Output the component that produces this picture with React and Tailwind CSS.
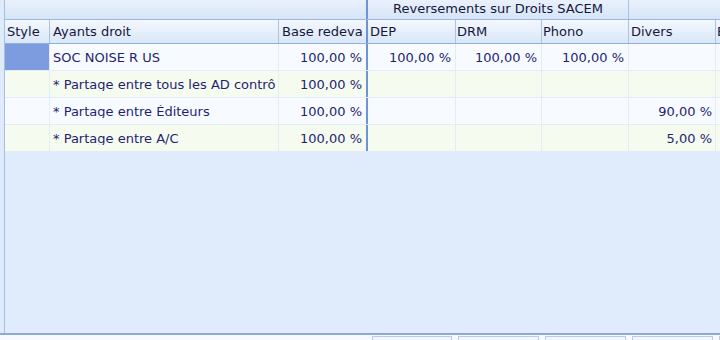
import React from "react";

const rows = [
  { name: "SOC NOISE R US", base: "100,00 %", dep: "100,00 %", drm: "100,00 %", phono: "100,00 %", divers: "", selected: true },
  { name: "* Partage entre tous les AD contrôlés", base: "100,00 %", dep: "", drm: "", phono: "", divers: "" },
  { name: "* Partage entre Éditeurs", base: "100,00 %", dep: "", drm: "", phono: "", divers: "90,00 %" },
  { name: "* Partage entre A/C", base: "100,00 %", dep: "", drm: "", phono: "", divers: "5,00 %" },
];

const font = { fontFamily: '"DejaVu Sans", Verdana, sans-serif' };

const App = () => {
  return (
    <div
      className="w-[720px] h-[340px] overflow-hidden bg-[#dfebfb] flex flex-col text-[13px] leading-none"
      style={font}
    >
      {/* Grid */}
      <div className="ml-[4px] h-[333px] border-l border-[#a4bfe3] bg-[#e0ecfc] flex flex-col overflow-hidden">
        {/* Group header band */}
        <div className="flex h-[20px] shrink-0 border-b border-[#9ab7e0] bg-gradient-to-b from-[#e9f1fc] to-[#d6e5f8] text-[#17173a]">
          <div className="w-[361px] shrink-0"></div>
          <div className="w-[2px] shrink-0 bg-[#6f94d4]"></div>
          <div className="w-[261px] shrink-0 border-r border-[#a9c3e6] flex items-center justify-center pb-[2px]">
            Reversements sur Droits SACEM
          </div>
          <div className="flex-1"></div>
        </div>

        {/* Column header band */}
        <div className="flex h-[24px] shrink-0 border-b border-[#8fb0dc] bg-gradient-to-b from-[#f4f8fe] to-[#d9e7f8] text-[#17173a]">
          <div className="w-[45px] shrink-0 border-r border-[#a9c3e6] flex items-center pl-[2px]">Style</div>
          <div className="w-[229px] shrink-0 border-r border-[#a9c3e6] flex items-center pl-[3px]">Ayants droit</div>
          <div className="w-[87px] shrink-0 flex items-center pl-[3px] pr-[3px]">
            <span className="block w-full overflow-hidden whitespace-nowrap">Base redevance</span>
          </div>
          <div className="w-[2px] shrink-0 bg-[#6f94d4]"></div>
          <div className="w-[88px] shrink-0 border-r border-[#a9c3e6] flex items-center pl-[2px]">DEP</div>
          <div className="w-[86px] shrink-0 border-r border-[#a9c3e6] flex items-center pl-[1px]">DRM</div>
          <div className="w-[87px] shrink-0 border-r border-[#a9c3e6] flex items-center pl-[1px]">Phono</div>
          <div className="w-[87px] shrink-0 border-r border-[#a9c3e6] flex items-center pl-[2px]">Divers</div>
          <div className="flex-1 flex items-center pl-[1px] overflow-hidden whitespace-nowrap">Edition</div>
        </div>

        {/* Data rows */}
        {rows.map((row, i) => (
          <div
            key={row.name}
            className={`flex h-[27px] shrink-0 border-b border-[#e3ecf7] text-[#1f1f72] ${
              i % 2 === 0 ? "bg-[#f7fbff]" : "bg-[#f5fbef]"
            }`}
          >
            <div
              className={`w-[45px] shrink-0 border-r border-[#e3ecf7] ${
                row.selected ? "bg-[#7d9ce0]" : ""
              }`}
            ></div>
            <div className="w-[229px] shrink-0 border-r border-[#e3ecf7] flex items-center pl-[3px] pr-[2px]">
              <span className="block w-full overflow-hidden whitespace-nowrap">{row.name}</span>
            </div>
            <div className="w-[87px] shrink-0 flex items-center justify-end pr-[4px]">{row.base}</div>
            <div className="w-[2px] shrink-0 bg-[#6f94d4]"></div>
            <div className="w-[88px] shrink-0 border-r border-[#e3ecf7] flex items-center justify-end pr-[4px]">{row.dep}</div>
            <div className="w-[86px] shrink-0 border-r border-[#e3ecf7] flex items-center justify-end pr-[4px]">{row.drm}</div>
            <div className="w-[87px] shrink-0 border-r border-[#e3ecf7] flex items-center justify-end pr-[4px]">{row.phono}</div>
            <div className="w-[87px] shrink-0 border-r border-[#e3ecf7] flex items-center justify-end pr-[3px]">{row.divers}</div>
            <div className="flex-1"></div>
          </div>
        ))}
      </div>

      {/* Bottom toolbar */}
      <div className="h-[7px] shrink-0 border-t-2 border-[#8eaad8] bg-[#f7faff] flex pl-[372px] pt-[1px] gap-[6px]">
        <div className="w-[80px] h-[10px] shrink-0 border border-[#b9cde9] bg-[#f2f7fd]"></div>
        <div className="w-[81px] h-[10px] shrink-0 border border-[#b9cde9] bg-[#f2f7fd]"></div>
        <div className="w-[81px] h-[10px] shrink-0 border border-[#b9cde9] bg-[#f2f7fd]"></div>
        <div className="w-[81px] h-[10px] shrink-0 border border-[#b9cde9] bg-[#f2f7fd]"></div>
        <div className="w-[81px] h-[10px] shrink-0 border border-[#b9cde9] bg-[#f2f7fd]"></div>
      </div>
    </div>
  );
};

export default App;
